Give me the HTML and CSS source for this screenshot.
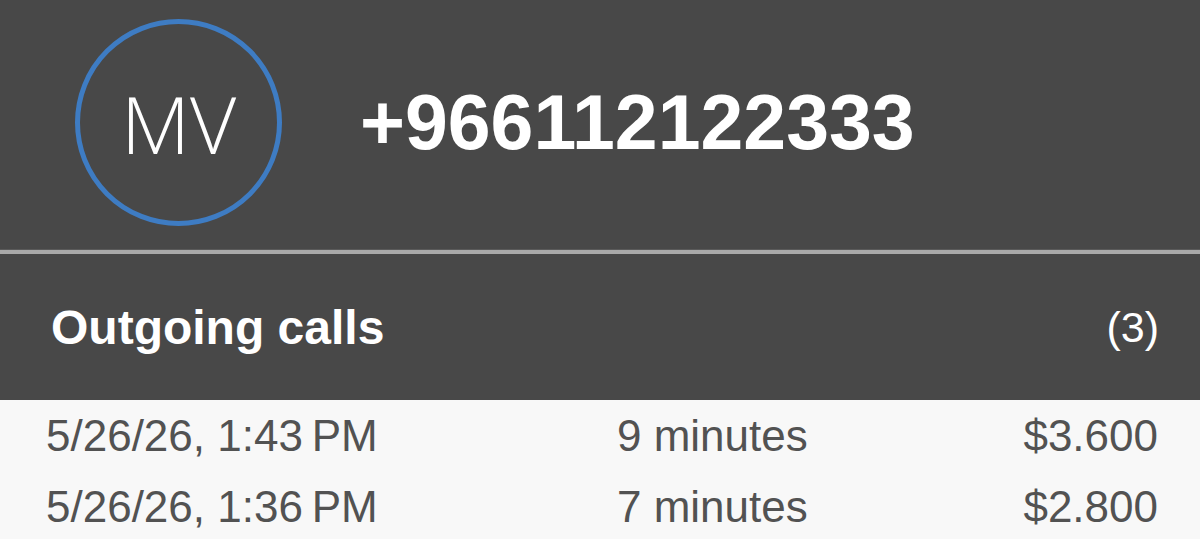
FILE: index.html
```html
<!DOCTYPE html>
<html lang="en">
<head>
  <meta charset="UTF-8">
  <title>Call Details</title>
  <meta name="viewport" content="width=device-width, initial-scale=1.0">
  <link rel="stylesheet" href="styles.css">
</head>
<body>

  <div class="contact">
    <div class="avatar">MV</div>
    <h1 class="number">+966112122333</h1>
  </div>

  <div class="divider"></div>

  <div class="section-head">
    <h2>Outgoing calls</h2>
    <span class="count">(3)</span>
  </div>

  <div class="calls">
    <div class="call-row">
      <span class="call-date">5/26/26, 1:43&#8201;PM</span>
      <span class="call-length">9 minutes</span>
      <span class="call-cost">$3.600</span>
    </div>
    <div class="call-row">
      <span class="call-date">5/26/26, 1:36&#8201;PM</span>
      <span class="call-length">7 minutes</span>
      <span class="call-cost">$2.800</span>
    </div>
  </div>

</body>
</html>
```

FILE: styles.css
```css
/* Base Styles */
body {
  font-family: 'Liberation Sans', Arial, Helvetica, sans-serif;
  background-color: #f8f8f8;
  margin: 0;
}

.contact {
  display: flex;
  align-items: center;
  height: 249px;
  padding-left: 75px;
  gap: 78px;
  background-color: #484848;
}

.avatar {
  width: 197px;
  height: 197px;
  border: 5px solid #3e7cc3;
  border-radius: 50%;
  display: flex;
  align-items: center;
  justify-content: center;
  color: #fff;
  font-family: 'Open Sans', 'Liberation Sans', sans-serif;
  font-weight: 300;
  font-size: 80px;
  margin-top: -4px;
}

.number {
  margin: 0;
  color: #fff;
  font-size: 77px;
  font-weight: bold;
  margin-top: -4px;
}

.divider {
  height: 4px;
  background-color: #a9a9a9;
  border-top: 1px solid #5a5a5a;
}

.section-head {
  display: flex;
  align-items: center;
  justify-content: space-between;
  height: 146px;
  padding: 0 41px 0 51px;
  background-color: #484848;
  color: #fff;
}

.section-head h2 {
  margin: 0;
  font-size: 48px;
  font-weight: bold;
}

.count {
  font-size: 43px;
}

.call-row {
  display: grid;
  grid-template-columns: 571px 1fr auto;
  align-items: center;
  height: 71px;
  padding: 0 42px 0 46px;
  font-size: 44px;
  color: #525252;
}
```
